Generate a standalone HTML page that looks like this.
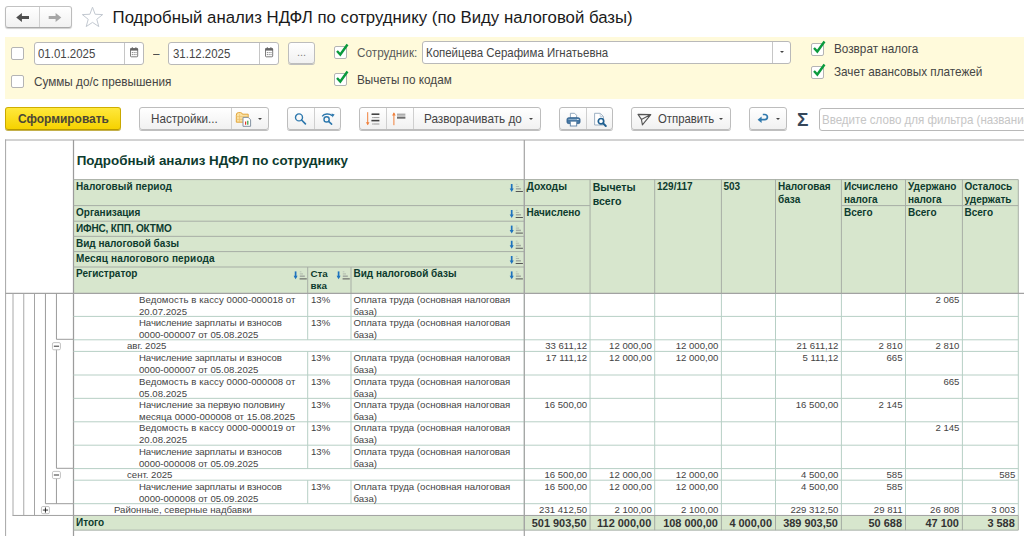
<!DOCTYPE html><html lang="ru"><head><meta charset="utf-8"><title>Подробный анализ НДФЛ по сотруднику</title><style>
html,body{margin:0;padding:0}
body{width:1024px;height:536px;overflow:hidden;background:#fff;position:relative;font-family:"Liberation Sans",sans-serif;color:#3c3c3c}
.a{position:absolute;white-space:nowrap}
.btn{position:absolute;box-sizing:border-box;border:1px solid #bdbdbd;border-radius:3px;background:linear-gradient(#ffffff,#f1f1f1);box-shadow:0 1px 0 #bfbfbf}
.dv{position:absolute;top:0;bottom:0;width:1px;background:#cfcfcf}
.cb{position:absolute;box-sizing:border-box;width:13px;height:13px;border:1px solid #b4b4b4;border-radius:2px;background:#fff}
.inp{position:absolute;box-sizing:border-box;border:1px solid #b9b9b9;border-radius:3px;background:#fff}
.t12{font-size:12.9px;line-height:14px;color:#454545;transform:scaleX(.911);transform-origin:0 50%}
.ti{font-size:12.8px;line-height:14px;color:#454545;transform:scaleX(.895);transform-origin:0 50%}
.h{position:absolute;white-space:nowrap;color:#0d3b2e;font-weight:bold;font-size:10px;line-height:12px}
.c{position:absolute;white-space:nowrap;font-size:9.6px;line-height:11.7px;color:#444}
.r{text-align:right}
</style></head><body>
<div class="btn" style="left:5px;top:6px;width:67px;height:22px;border-color:#c2c2c2 #bcbcbc #a9a9a9;box-shadow:0 1px 1px #cfcfcf"><div class="dv" style="left:33px"></div></div>
<svg class="a" style="left:0;top:0" width="112" height="36" viewBox="0 0 112 36"><path d="M16.2 17.5L21.9 12.9V16.1H29V18.9H21.9V22.1Z" fill="#4f4f4f"/><path d="M61.3 17.5L55.6 12.9V16.1H48.7V18.9H55.6V22.1Z" fill="#a6a6a6"/></svg>
<svg class="a" style="left:81px;top:6px" width="23" height="23" viewBox="0 0 23 23"><path d="M11.50 1.20L14.14 8.26L21.68 8.59L15.77 13.29L17.79 20.56L11.50 16.39L5.21 20.56L7.23 13.29L1.32 8.59L8.86 8.26Z" fill="none" stroke="#c3c9d1" stroke-width="1" stroke-linejoin="miter"/></svg>
<div class="a" style="left:112.6px;top:8px;font-size:16.79px;line-height:20px;color:#1a1a1a">Подробный анализ НДФЛ по сотруднику (по Виду налоговой базы)</div>
<div class="a" style="left:5px;top:37px;width:1019px;height:62px;background:#fffadb"></div>
<div class="cb" style="left:11px;top:47px"></div>
<div class="inp" style="left:34px;top:42px;width:110px;height:23px"><div class="a ti" style="left:3px;top:4px">01.01.2025</div><div class="dv" style="left:89px;background:#c6c6c6"></div><div class="a" style="left:90px;top:0;width:19px;height:21px"><svg class="a" style="left:5px;top:4px" width="9" height="11" viewBox="0 0 9 11"><rect x="0.5" y="1.6" width="7.2" height="8.2" rx="0.8" fill="#fff" stroke="#6e6e6e" stroke-width="0.9"/><rect x="0.2" y="1.3" width="7.8" height="2.3" fill="#666"/><path d="M2.3 0.2V2M5.9 0.2V2" stroke="#666" stroke-width="1"/><path d="M1.8 5.6H6.6M1.8 7.6H6.6" stroke="#8a8a8a" stroke-width="1" stroke-dasharray="1.2 0.6"/></svg></div></div>
<div class="a t12" style="left:153px;top:47px">–</div>
<div class="inp" style="left:168px;top:42px;width:111px;height:23px"><div class="a ti" style="left:3.6px;top:4px">31.12.2025</div><div class="dv" style="left:90px;background:#c6c6c6"></div><div class="a" style="left:91px;top:0;width:19px;height:21px"><svg class="a" style="left:5px;top:4px" width="9" height="11" viewBox="0 0 9 11"><rect x="0.5" y="1.6" width="7.2" height="8.2" rx="0.8" fill="#fff" stroke="#6e6e6e" stroke-width="0.9"/><rect x="0.2" y="1.3" width="7.8" height="2.3" fill="#666"/><path d="M2.3 0.2V2M5.9 0.2V2" stroke="#666" stroke-width="1"/><path d="M1.8 5.6H6.6M1.8 7.6H6.6" stroke="#8a8a8a" stroke-width="1" stroke-dasharray="1.2 0.6"/></svg></div></div>
<div class="btn" style="left:288px;top:42px;width:27px;height:22px"><div class="a" style="left:8px;top:3px;font-size:11px;color:#808080">...</div></div>
<div class="cb" style="left:11px;top:75px"></div>
<div class="a t12" style="left:34px;top:75px">Суммы до/с превышения</div>
<div class="cb" style="left:334px;top:46px"><svg class="a" style="left:0px;top:-4px" width="14" height="14" viewBox="0 0 14 14"><path d="M2 8L5.3 11.5L12.5 1.5" fill="none" stroke="#0a9a3c" stroke-width="2.4"/></svg></div>
<div class="a t12" style="left:357px;top:46px;color:#5a5a5a">Сотрудник:</div>
<div class="inp" style="left:422px;top:41px;width:369px;height:23px"><div class="a ti" style="left:3px;top:4px">Копейцева Серафима Игнатьевна</div><div class="dv" style="left:349px;background:#c6c6c6"></div><div class="a" style="left:356.5px;top:8.5px;width:0;height:0;border-left:2.6px solid transparent;border-right:2.6px solid transparent;border-top:2.8px solid #444"></div></div>
<div class="cb" style="left:334px;top:73px"><svg class="a" style="left:0px;top:-4px" width="14" height="14" viewBox="0 0 14 14"><path d="M2 8L5.3 11.5L12.5 1.5" fill="none" stroke="#0a9a3c" stroke-width="2.4"/></svg></div>
<div class="a t12" style="left:357px;top:73px">Вычеты по кодам</div>
<div class="cb" style="left:811px;top:43px"><svg class="a" style="left:0px;top:-4px" width="14" height="14" viewBox="0 0 14 14"><path d="M2 8L5.3 11.5L12.5 1.5" fill="none" stroke="#0a9a3c" stroke-width="2.4"/></svg></div>
<div class="a t12" style="left:834px;top:42px">Возврат налога</div>
<div class="cb" style="left:811px;top:66px"><svg class="a" style="left:0px;top:-4px" width="14" height="14" viewBox="0 0 14 14"><path d="M2 8L5.3 11.5L12.5 1.5" fill="none" stroke="#0a9a3c" stroke-width="2.4"/></svg></div>
<div class="a t12" style="left:834px;top:65px">Зачет авансовых платежей</div>
<div class="btn" style="left:5px;top:107px;width:116px;height:23px;background:linear-gradient(#ffe83c,#f6d200);border-color:#cfae00 #c9a800 #b99a00;box-shadow:0 1px 0 #c4b04a"><div class="a" style="left:11.5px;top:4px;font-size:13px;line-height:14px;font-weight:bold;color:#4b4636;transform:scaleX(.918);transform-origin:0 50%">Сформировать</div></div>
<div class="btn" style="left:139px;top:107px;width:130px;height:23px"><div class="a t12" style="left:11px;top:4px;color:#444;transform:scaleX(.903)">Настройки...</div><div class="dv" style="left:91px"></div><svg class="a" style="left:95px;top:3px" width="18" height="17" viewBox="0 0 18 17"><path d="M1.3 4.2Q1.3 1.6 3.4 1.6H5.6Q7 1.6 7.4 3.2H13.2V11.2H1.3Z" fill="#fbe2a2" stroke="#e3a53c" stroke-width="1"/><path d="M1.5 5.6H13M1.5 8.4H8M4.6 3.4V11" stroke="#ecc070" stroke-width="0.8"/><path d="M8 6.4H13.2L15.6 8.8V15.3H8Z" fill="#fff" stroke="#8593a3" stroke-width="1"/><path d="M10.6 13.8V10.6" stroke="#e0392b" stroke-width="1.2"/><path d="M12.8 13.8V9.8" stroke="#2f9e44" stroke-width="1.2"/></svg><div class="a" style="left:117.5px;top:10px;width:0;height:0;border-left:2.6px solid transparent;border-right:2.6px solid transparent;border-top:2.8px solid #444"></div></div>
<div class="btn" style="left:287px;top:107px;width:54px;height:23px"><div class="dv" style="left:26px"></div><svg class="a" style="left:5px;top:4px" width="16" height="15" viewBox="0 0 16 15"><circle cx="6" cy="5.4" r="3.5" fill="none" stroke="#2d78ad" stroke-width="1.4"/><path d="M8.6 8L12.4 11.8" stroke="#2d78ad" stroke-width="1.7" stroke-linecap="round"/></svg><svg class="a" style="left:31px;top:3px" width="18" height="16" viewBox="0 0 18 16"><circle cx="7.6" cy="8.4" r="2.6" fill="none" stroke="#2d78ad" stroke-width="1.4"/><path d="M9.6 10.4L12.6 13.2" stroke="#2d78ad" stroke-width="1.6" stroke-linecap="round"/><path d="M3.2 5.4C5.2 2.4 10.2 2.2 13.2 4.6" fill="none" stroke="#2d78ad" stroke-width="1.4"/><path d="M12.6 2.4L15.6 3.4L13.4 6.6Z" fill="#2d78ad"/></svg></div>
<div class="btn" style="left:359px;top:107px;width:182px;height:23px"><div class="dv" style="left:26px"></div><div class="dv" style="left:53px"></div><svg class="a" style="left:4px;top:3px" width="18" height="16" viewBox="0 0 18 16"><path d="M3.7 1.2V13.6" stroke="#f0803c" stroke-width="1"/><path d="M1.9 11.2L3.7 14.2L5.5 11.2Z" fill="#f0803c"/><path d="M8 3.2H15.4" stroke="#444" stroke-width="1.6"/><path d="M9.2 6.6H15.4" stroke="#9a9a9a" stroke-width="1"/><path d="M7.4 9.6H15.4" stroke="#444" stroke-width="1.6"/><path d="M9.2 13H15.4" stroke="#9a9a9a" stroke-width="1"/><path d="M7 3.2H8M8.4 6.6H9M8.4 13H9" stroke="#777" stroke-width="1"/></svg><svg class="a" style="left:31px;top:3px" width="18" height="16" viewBox="0 0 18 16"><path d="M2.9 14.2V2" stroke="#f0803c" stroke-width="1"/><path d="M1.1 4.4L2.9 1.2L4.7 4.4Z" fill="#f0803c"/><path d="M6 3.2H14.4M6 5H14.4" stroke="#8a8a8a" stroke-width="1"/><path d="M6 6.9H14.4" stroke="#222" stroke-width="1.1"/></svg><div class="a t12" style="left:64.2px;top:4px;color:#444">Разворачивать до</div><div class="a" style="left:169px;top:10px;width:0;height:0;border-left:2.6px solid transparent;border-right:2.6px solid transparent;border-top:2.8px solid #444"></div></div>
<div class="btn" style="left:559px;top:107px;width:54px;height:23px"><div class="dv" style="left:26px"></div><svg class="a" style="left:6px;top:4px" width="15" height="15" viewBox="0 0 15 15"><path d="M4.4 6V1.3H8.6L10.6 3.3V6Z" fill="#fff" stroke="#8aa2b8" stroke-width="0.9"/><rect x="1" y="5.8" width="13" height="5.8" rx="1.6" fill="#4677a3" stroke="#2f5f8c" stroke-width="0.9"/><path d="M2.4 7.4H12.6" stroke="#8fb0cd" stroke-width="1"/><rect x="4.3" y="9.2" width="6.4" height="4.8" fill="#fff" stroke="#5f84a6" stroke-width="0.9"/><rect x="11.3" y="7" width="1.2" height="1" fill="#fff"/></svg><svg class="a" style="left:32px;top:4px" width="16" height="16" viewBox="0 0 16 16"><path d="M2.6 1.3H8.2L11.4 4.5V13H2.6Z" fill="#fff" stroke="#93a8bc" stroke-width="0.9"/><path d="M8.2 1.3V4.5H11.4" fill="none" stroke="#b6c4d2" stroke-width="0.8"/><circle cx="9" cy="9.2" r="2.7" fill="#fff" stroke="#1f5f90" stroke-width="1.7"/><path d="M11.2 11.4L13.8 14" stroke="#1f5f90" stroke-width="2" stroke-linecap="round"/></svg></div>
<div class="btn" style="left:631px;top:107px;width:100px;height:23px"><svg class="a" style="left:5px;top:5px" width="15" height="13" viewBox="0 0 15 13"><path d="M1 1.4L13.8 1.6L5.4 11.8L4.4 6.4Z M4.4 6.4L13.8 1.6" fill="none" stroke="#555" stroke-width="1.1" stroke-linejoin="round"/></svg><div class="a t12" style="left:25.7px;top:4px;color:#444;transform:scaleX(.88)">Отправить</div><div class="a" style="left:87px;top:10px;width:0;height:0;border-left:2.6px solid transparent;border-right:2.6px solid transparent;border-top:2.8px solid #444"></div></div>
<div class="btn" style="left:749px;top:107px;width:38px;height:23px"><svg class="a" style="left:6px;top:5px" width="13" height="12" viewBox="0 0 13 12"><path d="M4.5 6.7H8.8A2.6 2.6 0 0 0 8.8 1.5H6.8" fill="none" stroke="#3079ad" stroke-width="1.7"/><path d="M5.6 3.4L1.6 6.7L5.6 10Z" fill="#3079ad"/></svg><div class="a" style="left:26px;top:10px;width:0;height:0;border-left:2.6px solid transparent;border-right:2.6px solid transparent;border-top:2.8px solid #444"></div></div>
<div class="a" style="left:797px;top:110px;font-size:18px;line-height:21px;font-weight:bold;color:#36475a;transform:scaleX(1.06);transform-origin:0 0">Σ</div>
<div class="inp" style="left:819px;top:108px;width:215px;height:23px"><div class="a" style="left:2px;top:4px;font-size:12.8px;line-height:14px;color:#c6c6c6;transform:scaleX(.902);transform-origin:0 50%">Введите слово для фильтра (название</div></div>
<svg class="a" style="left:0;top:0" width="1024" height="536" viewBox="0 0 1024 536"><rect x="73.5" y="179.6" width="944.8" height="113.8" fill="#d7e6cd"/><rect x="73.5" y="515.45" width="944.8" height="14.7" fill="#d7e6cd"/><path d="M5 140.0H1024" stroke="#a6a6a6" stroke-width="1"/><path d="M5.6 139.5V536" stroke="#a6a6a6" stroke-width="1"/><path d="M73.5 140V536" stroke="#9c9c9c" stroke-width="1.25"/><path d="M73.5 179.6H1018.3" stroke="#a7aea5" stroke-width="1"/><path d="M73.5 205.6H524.3" stroke="#a7aea5" stroke-width="1"/><path d="M73.5 221.2H524.3" stroke="#a7aea5" stroke-width="1"/><path d="M73.5 236.35H524.3" stroke="#a7aea5" stroke-width="1"/><path d="M73.5 251.6H524.3" stroke="#a7aea5" stroke-width="1"/><path d="M73.5 267.0H524.3" stroke="#a7aea5" stroke-width="1"/><path d="M524.3 205.6H590.05" stroke="#a7aea5" stroke-width="1"/><path d="M841.4 205.6H1018.3" stroke="#a7aea5" stroke-width="1"/><path d="M307.7 267.0V293.4" stroke="#a7aea5" stroke-width="1"/><path d="M351.0 267.0V293.4" stroke="#a7aea5" stroke-width="1"/><path d="M524.3 179.6V293.4" stroke="#a7aea5" stroke-width="1"/><path d="M590.05 179.6V293.4" stroke="#a7aea5" stroke-width="1"/><path d="M654.7 179.6V293.4" stroke="#a7aea5" stroke-width="1"/><path d="M721.4 179.6V293.4" stroke="#a7aea5" stroke-width="1"/><path d="M775.5 179.6V293.4" stroke="#a7aea5" stroke-width="1"/><path d="M841.4 179.6V293.4" stroke="#a7aea5" stroke-width="1"/><path d="M905.5 179.6V293.4" stroke="#a7aea5" stroke-width="1"/><path d="M962.4 179.6V293.4" stroke="#a7aea5" stroke-width="1"/><path d="M1018.3 179.6V293.4" stroke="#a7aea5" stroke-width="1"/><path d="M73.5 316.4H1018.3" stroke="#b7cfc5" stroke-width="1"/><path d="M73.5 339.8H1018.3" stroke="#b7cfc5" stroke-width="1"/><path d="M73.5 351.4H1018.3" stroke="#b7cfc5" stroke-width="1"/><path d="M73.5 375.0H1018.3" stroke="#b7cfc5" stroke-width="1"/><path d="M73.5 398.35H1018.3" stroke="#b7cfc5" stroke-width="1"/><path d="M73.5 421.8H1018.3" stroke="#b7cfc5" stroke-width="1"/><path d="M73.5 445.2H1018.3" stroke="#b7cfc5" stroke-width="1"/><path d="M73.5 468.6H1018.3" stroke="#b7cfc5" stroke-width="1"/><path d="M73.5 480.2H1018.3" stroke="#b7cfc5" stroke-width="1"/><path d="M73.5 503.7H1018.3" stroke="#b7cfc5" stroke-width="1"/><path d="M524.3 293.4V515.45" stroke="#b7cfc5" stroke-width="1"/><path d="M590.05 293.4V515.45" stroke="#b7cfc5" stroke-width="1"/><path d="M654.7 293.4V515.45" stroke="#b7cfc5" stroke-width="1"/><path d="M721.4 293.4V515.45" stroke="#b7cfc5" stroke-width="1"/><path d="M775.5 293.4V515.45" stroke="#b7cfc5" stroke-width="1"/><path d="M841.4 293.4V515.45" stroke="#b7cfc5" stroke-width="1"/><path d="M905.5 293.4V515.45" stroke="#b7cfc5" stroke-width="1"/><path d="M962.4 293.4V515.45" stroke="#b7cfc5" stroke-width="1"/><path d="M1018.3 293.4V515.45" stroke="#b7cfc5" stroke-width="1"/><path d="M307.7 293.4V316.4" stroke="#b7cfc5" stroke-width="1"/><path d="M351.0 293.4V316.4" stroke="#b7cfc5" stroke-width="1"/><path d="M307.7 316.4V339.8" stroke="#b7cfc5" stroke-width="1"/><path d="M351.0 316.4V339.8" stroke="#b7cfc5" stroke-width="1"/><path d="M307.7 351.4V375.0" stroke="#b7cfc5" stroke-width="1"/><path d="M351.0 351.4V375.0" stroke="#b7cfc5" stroke-width="1"/><path d="M307.7 375.0V398.35" stroke="#b7cfc5" stroke-width="1"/><path d="M351.0 375.0V398.35" stroke="#b7cfc5" stroke-width="1"/><path d="M307.7 398.35V421.8" stroke="#b7cfc5" stroke-width="1"/><path d="M351.0 398.35V421.8" stroke="#b7cfc5" stroke-width="1"/><path d="M307.7 421.8V445.2" stroke="#b7cfc5" stroke-width="1"/><path d="M351.0 421.8V445.2" stroke="#b7cfc5" stroke-width="1"/><path d="M307.7 445.2V468.6" stroke="#b7cfc5" stroke-width="1"/><path d="M351.0 445.2V468.6" stroke="#b7cfc5" stroke-width="1"/><path d="M307.7 480.2V503.7" stroke="#b7cfc5" stroke-width="1"/><path d="M351.0 480.2V503.7" stroke="#b7cfc5" stroke-width="1"/><path d="M524.3 515.45V530.15" stroke="#a4aca3" stroke-width="1"/><path d="M590.05 515.45V530.15" stroke="#a4aca3" stroke-width="1"/><path d="M654.7 515.45V530.15" stroke="#a4aca3" stroke-width="1"/><path d="M721.4 515.45V530.15" stroke="#a4aca3" stroke-width="1"/><path d="M775.5 515.45V530.15" stroke="#a4aca3" stroke-width="1"/><path d="M841.4 515.45V530.15" stroke="#a4aca3" stroke-width="1"/><path d="M905.5 515.45V530.15" stroke="#a4aca3" stroke-width="1"/><path d="M962.4 515.45V530.15" stroke="#a4aca3" stroke-width="1"/><path d="M1018.3 515.45V530.15" stroke="#a4aca3" stroke-width="1"/><path d="M73.5 530.15H1018.3" stroke="#a9b0a8" stroke-width="1"/><path d="M5.5 293.4H1024" stroke="#a2a2a2" stroke-width="1.2"/><path d="M12.5 515.45H1018.3" stroke="#a0a0a0" stroke-width="1"/><path d="M524.3 140V536" stroke="#a3a3a3" stroke-width="1.2"/><path d="M13.0 293.4V515.45" stroke="#a8a8a8" stroke-width="1"/><path d="M23.75 293.4V515.45" stroke="#a8a8a8" stroke-width="1"/><path d="M34.5 293.4V515.45" stroke="#a4a4a4" stroke-width="1"/><path d="M45.45 293.4V503.7" stroke="#9c9c9c" stroke-width="1"/><path d="M45.45 503.7H73.5" stroke="#9c9c9c" stroke-width="1"/><path d="M56.45 293.4V339.3" stroke="#9c9c9c" stroke-width="1"/><path d="M56.45 339.3H73.5" stroke="#9c9c9c" stroke-width="1"/><path d="M56.45 344.8V468.3" stroke="#9c9c9c" stroke-width="1"/><path d="M56.45 468.3H73.5" stroke="#9c9c9c" stroke-width="1"/><path d="M56.45 473.6V503.7" stroke="#9c9c9c" stroke-width="1"/><rect x="52.45" y="342.6" width="8" height="7.2" rx="1.4" fill="#fff" stroke="#bcbcbc" stroke-width="0.9"/><path d="M53.85 346.20000000000005H59.050000000000004" stroke="#111" stroke-width="0.85"/><rect x="52.45" y="471.4" width="8" height="7.2" rx="1.4" fill="#fff" stroke="#bcbcbc" stroke-width="0.9"/><path d="M53.85 475.0H59.050000000000004" stroke="#111" stroke-width="0.85"/><rect x="41.45" y="506.475" width="8" height="7.2" rx="1.4" fill="#fff" stroke="#bcbcbc" stroke-width="0.9"/><path d="M42.85 510.07500000000005H48.050000000000004" stroke="#111" stroke-width="0.85"/><path d="M45.45 507.475V512.6750000000001" stroke="#111" stroke-width="0.85"/><g transform="translate(509.7 184.0)"><path d="M2 0V6" stroke="#1e73be" stroke-width="1.7"/><path d="M0 4.4L2 7.9L4 4.4Z" fill="#1e73be"/><path d="M6.2 0.4H7.8" stroke="#b4beb2" stroke-width="0.8"/><path d="M6.2 2.5H9.4" stroke="#aab4a8" stroke-width="0.9"/><path d="M6.2 4.8H11.2" stroke="#a3a9a1" stroke-width="1.5"/><path d="M6 7.5H13.2" stroke="#555" stroke-width="1"/></g><g transform="translate(509.7 210.0)"><path d="M2 0V6" stroke="#1e73be" stroke-width="1.7"/><path d="M0 4.4L2 7.9L4 4.4Z" fill="#1e73be"/><path d="M6.2 0.4H7.8" stroke="#b4beb2" stroke-width="0.8"/><path d="M6.2 2.5H9.4" stroke="#aab4a8" stroke-width="0.9"/><path d="M6.2 4.8H11.2" stroke="#a3a9a1" stroke-width="1.5"/><path d="M6 7.5H13.2" stroke="#555" stroke-width="1"/></g><g transform="translate(509.7 225.6)"><path d="M2 0V6" stroke="#1e73be" stroke-width="1.7"/><path d="M0 4.4L2 7.9L4 4.4Z" fill="#1e73be"/><path d="M6.2 0.4H7.8" stroke="#b4beb2" stroke-width="0.8"/><path d="M6.2 2.5H9.4" stroke="#aab4a8" stroke-width="0.9"/><path d="M6.2 4.8H11.2" stroke="#a3a9a1" stroke-width="1.5"/><path d="M6 7.5H13.2" stroke="#555" stroke-width="1"/></g><g transform="translate(509.7 240.75)"><path d="M2 0V6" stroke="#1e73be" stroke-width="1.7"/><path d="M0 4.4L2 7.9L4 4.4Z" fill="#1e73be"/><path d="M6.2 0.4H7.8" stroke="#b4beb2" stroke-width="0.8"/><path d="M6.2 2.5H9.4" stroke="#aab4a8" stroke-width="0.9"/><path d="M6.2 4.8H11.2" stroke="#a3a9a1" stroke-width="1.5"/><path d="M6 7.5H13.2" stroke="#555" stroke-width="1"/></g><g transform="translate(509.7 256.0)"><path d="M2 0V6" stroke="#1e73be" stroke-width="1.7"/><path d="M0 4.4L2 7.9L4 4.4Z" fill="#1e73be"/><path d="M6.2 0.4H7.8" stroke="#b4beb2" stroke-width="0.8"/><path d="M6.2 2.5H9.4" stroke="#aab4a8" stroke-width="0.9"/><path d="M6.2 4.8H11.2" stroke="#a3a9a1" stroke-width="1.5"/><path d="M6 7.5H13.2" stroke="#555" stroke-width="1"/></g><g transform="translate(293.6 271.4)"><path d="M2 0V6" stroke="#1e73be" stroke-width="1.7"/><path d="M0 4.4L2 7.9L4 4.4Z" fill="#1e73be"/><path d="M6.2 0.4H7.8" stroke="#b4beb2" stroke-width="0.8"/><path d="M6.2 2.5H9.4" stroke="#aab4a8" stroke-width="0.9"/><path d="M6.2 4.8H11.2" stroke="#a3a9a1" stroke-width="1.5"/><path d="M6 7.5H13.2" stroke="#555" stroke-width="1"/></g><g transform="translate(336.6 271.4)"><path d="M2 0V6" stroke="#1e73be" stroke-width="1.7"/><path d="M0 4.4L2 7.9L4 4.4Z" fill="#1e73be"/><path d="M6.2 0.4H7.8" stroke="#b4beb2" stroke-width="0.8"/><path d="M6.2 2.5H9.4" stroke="#aab4a8" stroke-width="0.9"/><path d="M6.2 4.8H11.2" stroke="#a3a9a1" stroke-width="1.5"/><path d="M6 7.5H13.2" stroke="#555" stroke-width="1"/></g><g transform="translate(509.7 271.4)"><path d="M2 0V6" stroke="#1e73be" stroke-width="1.7"/><path d="M0 4.4L2 7.9L4 4.4Z" fill="#1e73be"/><path d="M6.2 0.4H7.8" stroke="#b4beb2" stroke-width="0.8"/><path d="M6.2 2.5H9.4" stroke="#aab4a8" stroke-width="0.9"/><path d="M6.2 4.8H11.2" stroke="#a3a9a1" stroke-width="1.5"/><path d="M6 7.5H13.2" stroke="#555" stroke-width="1"/></g></svg>
<div class="a" style="left:76.7px;top:153px;font-size:13.4px;line-height:16px;font-weight:bold;color:#0d3b2e">Подробный анализ НДФЛ по сотруднику</div>
<div class="h" style="left:76px;top:181.1px;font-size:10px;line-height:12px"><span style="letter-spacing:.06px">Налоговый период</span></div>
<div class="h" style="left:76px;top:207.1px;font-size:10px;line-height:12px">Организация</div>
<div class="h" style="left:76px;top:222.7px;font-size:10px;line-height:12px"><span style="letter-spacing:-.16px">ИФНС, КПП, ОКТМО</span></div>
<div class="h" style="left:76px;top:237.85px;font-size:10px;line-height:12px">Вид налоговой базы</div>
<div class="h" style="left:76px;top:253.1px;font-size:10px;line-height:12px"><span style="letter-spacing:.16px">Месяц налогового периода</span></div>
<div class="h" style="left:76px;top:268px;font-size:10px;line-height:12px">Регистратор</div>
<div class="h" style="left:310.5px;top:268px;font-size:9.8px;line-height:12.2px">Ста<br>вка</div>
<div class="h" style="left:353.5px;top:268px;font-size:10px;line-height:12px">Вид налоговой базы</div>
<div class="h" style="left:526.5px;top:181.1px;font-size:10.3px;line-height:12px">Доходы</div>
<div class="h" style="left:526.5px;top:207.1px;font-size:10px;line-height:12px">Начислено</div>
<div class="h" style="left:592.7px;top:181.1px;font-size:10.6px;line-height:13.5px">Вычеты<br>всего</div>
<div class="h" style="left:657px;top:181.1px;font-size:10px;line-height:12px">129/117</div>
<div class="h" style="left:723.5px;top:181.1px;font-size:10px;line-height:12px">503</div>
<div class="h" style="left:778px;top:181.1px;font-size:10px;line-height:12.7px">Налоговая<br>база</div>
<div class="h" style="left:844px;top:181.1px;font-size:10px;line-height:12.7px">Исчислено<br>налога</div>
<div class="h" style="left:844px;top:207.1px;font-size:10px;line-height:12px">Всего</div>
<div class="h" style="left:908px;top:181.1px;font-size:10px;line-height:12.7px">Удержано<br>налога</div>
<div class="h" style="left:908px;top:207.1px;font-size:10px;line-height:12px">Всего</div>
<div class="h" style="left:964.5px;top:181.1px;font-size:10px;line-height:12.7px">Осталось<br>удержать</div>
<div class="h" style="left:964.5px;top:207.1px;font-size:10px;line-height:12px">Всего</div>
<div class="c" style="left:139px;top:294px;"><span style="letter-spacing:.1px">Ведомость в кассу </span>0000-000018 от<br>20.07.2025</div>
<div class="c" style="left:311px;top:294px;">13%</div>
<div class="c" style="left:353.5px;top:294px;">Оплата труда (основная налоговая<br>база)</div>
<div class="c r" style="left:905.5px;top:294px;width:53.9px;">2 065</div>
<div class="c" style="left:139px;top:317px;"><span style="letter-spacing:-.078px">Начисление зарплаты и взносов</span><br>0000-000007 от 05.08.2025</div>
<div class="c" style="left:311px;top:317px;">13%</div>
<div class="c" style="left:353.5px;top:317px;">Оплата труда (основная налоговая<br>база)</div>
<div class="c" style="left:127px;top:340px;">авг. 2025</div>
<div class="c r" style="left:524.3px;top:340px;width:62.8px;">33 611,12</div>
<div class="c r" style="left:590.05px;top:340px;width:61.7px;">12 000,00</div>
<div class="c r" style="left:654.7px;top:340px;width:63.7px;">12 000,00</div>
<div class="c r" style="left:775.5px;top:340px;width:62.9px;">21 611,12</div>
<div class="c r" style="left:841.4px;top:340px;width:61.1px;">2 810</div>
<div class="c r" style="left:905.5px;top:340px;width:53.9px;">2 810</div>
<div class="c" style="left:139px;top:352px;"><span style="letter-spacing:-.078px">Начисление зарплаты и взносов</span><br>0000-000007 от 05.08.2025</div>
<div class="c" style="left:311px;top:352px;">13%</div>
<div class="c" style="left:353.5px;top:352px;">Оплата труда (основная налоговая<br>база)</div>
<div class="c r" style="left:524.3px;top:352px;width:62.8px;">17 111,12</div>
<div class="c r" style="left:590.05px;top:352px;width:61.7px;">12 000,00</div>
<div class="c r" style="left:654.7px;top:352px;width:63.7px;">12 000,00</div>
<div class="c r" style="left:775.5px;top:352px;width:62.9px;">5 111,12</div>
<div class="c r" style="left:841.4px;top:352px;width:61.1px;">665</div>
<div class="c" style="left:139px;top:376px;"><span style="letter-spacing:.1px">Ведомость в кассу </span>0000-000008 от<br>05.08.2025</div>
<div class="c" style="left:311px;top:376px;">13%</div>
<div class="c" style="left:353.5px;top:376px;">Оплата труда (основная налоговая<br>база)</div>
<div class="c r" style="left:905.5px;top:376px;width:53.9px;">665</div>
<div class="c" style="left:139px;top:399px;"><span style="letter-spacing:-.026px">Начисление за первую половину</span><br><span style="letter-spacing:.04px">месяца 0000-000008 от 15.08.2025</span></div>
<div class="c" style="left:311px;top:399px;">13%</div>
<div class="c" style="left:353.5px;top:399px;">Оплата труда (основная налоговая<br>база)</div>
<div class="c r" style="left:524.3px;top:399px;width:62.8px;">16 500,00</div>
<div class="c r" style="left:775.5px;top:399px;width:62.9px;">16 500,00</div>
<div class="c r" style="left:841.4px;top:399px;width:61.1px;">2 145</div>
<div class="c" style="left:139px;top:422px;"><span style="letter-spacing:.1px">Ведомость в кассу </span>0000-000019 от<br>20.08.2025</div>
<div class="c" style="left:311px;top:422px;">13%</div>
<div class="c" style="left:353.5px;top:422px;">Оплата труда (основная налоговая<br>база)</div>
<div class="c r" style="left:905.5px;top:422px;width:53.9px;">2 145</div>
<div class="c" style="left:139px;top:446px;"><span style="letter-spacing:-.078px">Начисление зарплаты и взносов</span><br>0000-000008 от 05.09.2025</div>
<div class="c" style="left:311px;top:446px;">13%</div>
<div class="c" style="left:353.5px;top:446px;">Оплата труда (основная налоговая<br>база)</div>
<div class="c" style="left:127px;top:469px;">сент. 2025</div>
<div class="c r" style="left:524.3px;top:469px;width:62.8px;">16 500,00</div>
<div class="c r" style="left:590.05px;top:469px;width:61.7px;">12 000,00</div>
<div class="c r" style="left:654.7px;top:469px;width:63.7px;">12 000,00</div>
<div class="c r" style="left:775.5px;top:469px;width:62.9px;">4 500,00</div>
<div class="c r" style="left:841.4px;top:469px;width:61.1px;">585</div>
<div class="c r" style="left:962.4px;top:469px;width:52.9px;">585</div>
<div class="c" style="left:139px;top:481px;"><span style="letter-spacing:-.078px">Начисление зарплаты и взносов</span><br>0000-000008 от 05.09.2025</div>
<div class="c" style="left:311px;top:481px;">13%</div>
<div class="c" style="left:353.5px;top:481px;">Оплата труда (основная налоговая<br>база)</div>
<div class="c r" style="left:524.3px;top:481px;width:62.8px;">16 500,00</div>
<div class="c r" style="left:590.05px;top:481px;width:61.7px;">12 000,00</div>
<div class="c r" style="left:654.7px;top:481px;width:63.7px;">12 000,00</div>
<div class="c r" style="left:775.5px;top:481px;width:62.9px;">4 500,00</div>
<div class="c r" style="left:841.4px;top:481px;width:61.1px;">585</div>
<div class="c" style="left:114px;top:504px;">Районные, северные надбавки</div>
<div class="c r" style="left:524.3px;top:504px;width:62.8px;">231 412,50</div>
<div class="c r" style="left:590.05px;top:504px;width:61.7px;">2 100,00</div>
<div class="c r" style="left:654.7px;top:504px;width:63.7px;">2 100,00</div>
<div class="c r" style="left:775.5px;top:504px;width:62.9px;">229 312,50</div>
<div class="c r" style="left:841.4px;top:504px;width:61.1px;">29 811</div>
<div class="c r" style="left:905.5px;top:504px;width:53.9px;">26 808</div>
<div class="c r" style="left:962.4px;top:504px;width:52.9px;">3 003</div>
<div class="h" style="left:76px;top:517px">Итого</div>
<div class="a" style="left:524.3px;top:517.1500000000001px;width:62.2px;text-align:right;font-size:10.95px;line-height:13px;font-weight:bold;color:#333">501 903,50</div>
<div class="a" style="left:590.05px;top:517.1500000000001px;width:61.2px;text-align:right;font-size:10.95px;line-height:13px;font-weight:bold;color:#333">112 000,00</div>
<div class="a" style="left:654.7px;top:517.1500000000001px;width:63.2px;text-align:right;font-size:10.95px;line-height:13px;font-weight:bold;color:#333">108 000,00</div>
<div class="a" style="left:721.4px;top:517.1500000000001px;width:50.6px;text-align:right;font-size:10.95px;line-height:13px;font-weight:bold;color:#333">4 000,00</div>
<div class="a" style="left:775.5px;top:517.1500000000001px;width:62.4px;text-align:right;font-size:10.95px;line-height:13px;font-weight:bold;color:#333">389 903,50</div>
<div class="a" style="left:841.4px;top:517.1500000000001px;width:60.6px;text-align:right;font-size:10.95px;line-height:13px;font-weight:bold;color:#333">50 688</div>
<div class="a" style="left:905.5px;top:517.1500000000001px;width:53.4px;text-align:right;font-size:10.95px;line-height:13px;font-weight:bold;color:#333">47 100</div>
<div class="a" style="left:962.4px;top:517.1500000000001px;width:52.4px;text-align:right;font-size:10.95px;line-height:13px;font-weight:bold;color:#333">3 588</div>
</body></html>
